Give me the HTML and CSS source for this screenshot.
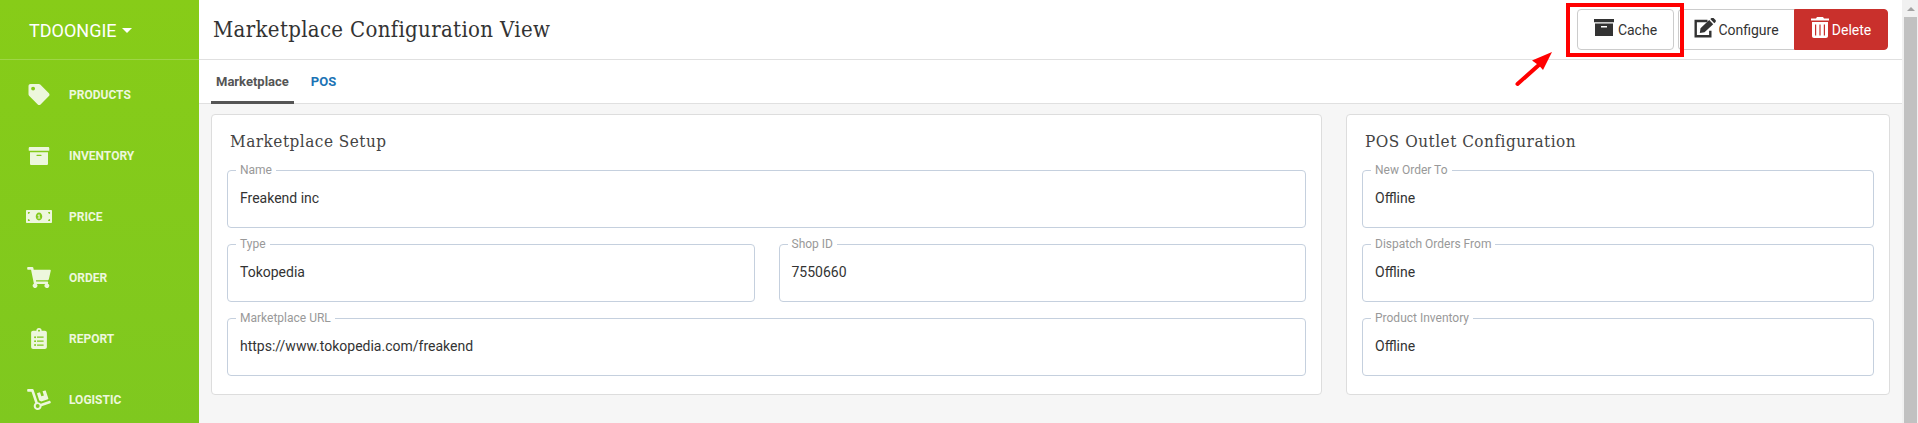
FILE: index.html
```html
<!DOCTYPE html>
<html lang="en">
<head>
  <meta charset="utf-8">
  <title>Marketplace Configuration View</title>
  <link rel="stylesheet" href="styles.css">
</head>
<body>

<div class="app">
  <nav class="sidebar">
    <div class="brand">TDOONGIE <span class="caret"></span></div>
    <ul class="menu">
      <li>
        <svg class="icon" viewBox="0 0 512 512" width="21" height="21"><path fill-rule="evenodd" d="M0 252V48C0 21 21 0 48 0h204a48 48 0 0 1 34 14l212 212c19 19 19 49 0 68L294 498c-19 19-49 19-68 0L14 286A48 48 0 0 1 0 252zM112 64a48 48 0 1 0 0 96 48 48 0 0 0 0-96z"/></svg>
        <span>PRODUCTS</span>
      </li>
      <li>
        <svg class="icon" viewBox="0 0 512 448" width="21" height="18"><path fill-rule="evenodd" d="M32 416c0 18 14 32 32 32h384c18 0 32-14 32-32V128H32zm160-212c0-7 5-12 12-12h104c7 0 12 5 12 12v8c0 7-5 12-12 12H204c-7 0-12-5-12-12zM480 0H32C14 0 0 14 0 32v48c0 9 7 16 16 16h480c9 0 16-7 16-16V32c0-18-14-32-32-32z"/></svg>
        <span>INVENTORY</span>
      </li>
      <li>
        <svg class="icon" viewBox="0 0 640 320" width="26" height="13"><path fill-rule="evenodd" d="M24 0h592c13 0 24 11 24 24v272c0 13-11 24-24 24H24c-13 0-24-11-24-24V24C0 11 11 0 24 0zM48 48v48c27 0 48-21 48-48zm0 176v48h48c0-27-21-48-48-48zM592 48h-48c0 27 21 48 48 48zm0 176c-27 0-48 21-48 48h48zM320 64c-44 0-80 43-80 96s36 96 80 96 80-43 80-96-36-96-80-96zm-32 144v-16h20v-56l-15 9-9-13 26-20h26v80h16v16z"/></svg>
        <span>PRICE</span>
      </li>
      <li>
        <svg class="icon" viewBox="0 0 576 512" width="24" height="21"><path d="M528 301l47-208c4-15-8-29-23-29H159l-9-45C148 8 138 0 126 0H24C11 0 0 11 0 24v16c0 13 11 24 24 24h70l70 343a56 56 0 1 0 67 9h210a56 56 0 1 0 64-10l5-25c4-15-8-29-23-29H218l-6-32h293c11 0 21-8 23-19z"/></svg>
        <span>ORDER</span>
      </li>
      <li>
        <svg class="icon" viewBox="0 0 384 512" width="16" height="21"><path fill-rule="evenodd" d="M336 64h-80a64 64 0 0 0-128 0H48C22 64 0 86 0 112v352c0 26 22 48 48 48h288c26 0 48-22 48-48V112c0-26-22-48-48-48zM192 40a24 24 0 1 1 0 48 24 24 0 0 1 0-48zM96 200a24 24 0 1 1 0 48 24 24 0 0 1 0-48zm0 96a24 24 0 1 1 0 48 24 24 0 0 1 0-48zm0 96a24 24 0 1 1 0 48 24 24 0 0 1 0-48zm48-184h160v32H144zm0 96h160v32H144zm0 96h160v32H144z"/></svg>
        <span>REPORT</span>
      </li>
      <li>
        <svg class="icon" viewBox="0 0 576 512" width="24" height="21"><path fill-rule="evenodd" d="M294 278c18 5 35 13 50 25l161-54c8-3 13-12 10-21L455 47c-3-8-12-13-20-10l-61 20 33 100-61 20-33-99-62 20c-8 3-13 12-10 20zM575 326l-10-30c-3-8-12-13-20-10l-214 71c-17-22-43-36-73-37L158 22A32 32 0 0 0 128 0H16C7 0 0 7 0 16v32c0 9 7 16 16 16h89l92 277c-26 20-42 53-36 90 6 39 38 72 77 79 60 11 112-35 114-92l213-72c8-3 13-12 10-20zM256 464a48 48 0 1 1 0-96 48 48 0 0 1 0 96z"/></svg>
        <span>LOGISTIC</span>
      </li>
    </ul>
  </nav>

  <main class="content">
    <header class="topbar">
      <h1>Marketplace Configuration View</h1>
      <div class="actions">
        <button class="btn cache">
          <svg viewBox="0 0 20 17" width="20" height="17"><path fill-rule="evenodd" d="M0 0h20v3.200H0zM1 4.400h18V17H1zM7 7v1.600h6V7z"/></svg>
          Cache
        </button>
        <div class="btn-group">
          <button class="btn configure">
            <svg viewBox="0 0 24 20" width="24" height="20"><path d="M13.500 3H1.700v15.300h14.600v-5.500" fill="none" stroke="currentColor" stroke-width="2.400"/><path d="M6.500 10.300l8.700-8.200 4 4.100-8.700 8.100-4.700.8zM16.300 1.100L17.500 0c.6-.5 1.500-.5 2 0l2 2.100c.5.600.5 1.400 0 2l-1.200 1.100z"/></svg>
            Configure
          </button>
          <button class="btn delete">
            <svg viewBox="0 0 18 21" width="18" height="21"><path fill-rule="evenodd" d="M0 1.500h5L6 0h6l1 1.500h5v2H0zM1 5h16v14c0 1.200-.8 2-2 2H3c-1.200 0-2-.8-2-2zm3 2.500v11h1.200v-11zm4.400 0v11h1.200v-11zm4.400 0v11H14v-11z"/></svg>
            Delete
          </button>
        </div>
      </div>
    </header>

    <div class="tabs">
      <a class="tab active">Marketplace</a>
      <a class="tab">POS</a>
    </div>

    <div class="panels">
      <section class="card">
        <h2>Marketplace Setup</h2>
        <fieldset><legend>Name</legend>Freakend inc</fieldset>
        <div class="row">
          <fieldset><legend>Type</legend>Tokopedia</fieldset>
          <fieldset><legend>Shop ID</legend>7550660</fieldset>
        </div>
        <fieldset><legend>Marketplace URL</legend>https://www.tokopedia.com/freakend</fieldset>
      </section>

      <section class="card">
        <h2>POS Outlet Configuration</h2>
        <fieldset><legend>New Order To</legend>Offline</fieldset>
        <fieldset><legend>Dispatch Orders From</legend>Offline</fieldset>
        <fieldset><legend>Product Inventory</legend>Offline</fieldset>
      </section>
    </div>
  </main>

  <div class="scrollbar">
    <svg viewBox="0 0 8 4" width="8" height="4"><path d="M0 4l4-4 4 4z"/></svg>
    <div class="thumb"></div>
  </div>
</div>

<!-- callout over the Cache button -->
<div class="highlight"></div>
<svg class="arrow" viewBox="0 0 40 36" width="40" height="36"><path d="M3.500 32L26 12" stroke="#f00" stroke-width="4" stroke-linecap="round"/><path d="M38 0L29 18l-4-4.500-7-5z" fill="#f00"/></svg>

</body>
</html>
```
FILE: styles.css
```css
* {
  box-sizing: border-box;
}

body {
  margin: 0;
  height: 423px;
  overflow: hidden;
  font: 14px/20px Roboto, Arial, sans-serif;
  color: #333;
  background: #f6f6f6;
}

h1, h2 {
  margin: 0;
  font-family: "Roboto Slab", "DejaVu Serif Condensed", "DejaVu Serif", serif;
  font-stretch: condensed;
  font-weight: normal;
  white-space: nowrap;
}

.app {
  display: grid;
  grid-template-columns: 199px 1fr 16px;
  height: 423px;
}

/* sidebar */
.sidebar {
  background: linear-gradient(#87cc18, #7fc81f);
  color: #fff;
  overflow: hidden;
}

.brand {
  display: flex;
  align-items: center;
  height: 60px;
  padding: 2px 0 0 29px;
  border-bottom: 1px solid #9fd646;
  font-size: 18px;
}

.caret {
  margin: -1px 0 0 5px;
  border: 5px solid transparent;
  border-top-color: #fff;
  border-bottom: 0;
}

.menu {
  margin: 0;
  padding: 4px 0 0;
  list-style: none;
}

.menu li {
  display: flex;
  align-items: center;
  gap: 17px;
  height: 61px;
  padding-left: 26px;
  font-size: 12px;
  font-weight: bold;
  color: #edf7dd;
}

.icon {
  width: 26px;
  fill: currentColor;
}

/* header */
.content {
  min-width: 0;
}

.topbar {
  display: flex;
  justify-content: space-between;
  height: 60px;
  padding: 9px 14px 0 14px;
  background: #fff;
  border-bottom: 1px solid #e0e0e0;
}

.topbar h1 {
  font-size: 22px;
  line-height: 42px;
  letter-spacing: 0.33px;
}

.actions {
  display: flex;
  gap: 4px;
}

.btn-group {
  display: flex;
}

.btn {
  display: flex;
  align-items: center;
  justify-content: center;
  height: 41px;
  padding: 0;
  border: 1px solid #ccc;
  border-radius: 4px;
  background: #fff;
  color: #333;
  font: inherit;
}

.btn svg {
  margin-top: -4px;
  fill: currentColor;
}

.cache {
  width: 97px;
  gap: 4px;
}

.configure {
  width: 116px;
  border-right: 0;
  border-radius: 4px 0 0 4px;
}

.delete {
  width: 94px;
  gap: 3px;
  border-color: #c9302c;
  border-radius: 0 4px 4px 0;
  background: #c9302c;
  color: #fff;
}

/* tabs */
.tabs {
  display: flex;
  gap: 12px;
  height: 44px;
  padding-left: 12px;
  background: #fff;
  border-bottom: 1px solid #e0e0e0;
}

.tab {
  height: 44px;
  padding: 0 5px;
  font-size: 13px;
  font-weight: bold;
  line-height: 43px;
  color: #1a73b5;
}

.tab.active {
  color: #555;
  border-bottom: 3px solid #555;
}

/* cards */
.panels {
  display: grid;
  grid-template-columns: 1111px 544px;
  gap: 24px;
  padding: 10px 12px;
}

.card {
  height: 281px;
  padding: 13px 15px 0;
  background: #fff;
  border: 1px solid #ddd;
  border-radius: 4px;
}

.card h2 {
  height: 34px;
  padding-left: 3px;
  font-size: 17px;
  line-height: 26px;
  letter-spacing: 0.5px;
  color: #444;
}

.row {
  display: grid;
  grid-template-columns: 1fr 1fr;
  gap: 24px;
}

fieldset {
  min-width: 0;
  height: 66px;
  margin: 0 0 8px;
  padding: 10px 12px 0;
  border: 1px solid #c5d0de;
  border-radius: 4px;
}

legend {
  margin-left: -4px;
  padding: 1px 4px 0;
  font-size: 12px;
  line-height: 15px;
  color: #999;
}

/* scrollbar */
.scrollbar {
  display: flex;
  flex-direction: column;
  align-items: center;
  padding: 7px 1px 0 2px;
  background: #f1f1f1;
}

.scrollbar svg {
  flex: none;
  fill: #a3a3a3;
}

.thumb {
  flex: 1;
  width: 13px;
  margin-top: 6px;
  background: #c1c1c1;
}

/* callout */
.highlight {
  position: absolute;
  left: 1566px;
  top: 3px;
  width: 118px;
  height: 54px;
  border: 4px solid #f00;
}

.arrow {
  position: absolute;
  left: 1514px;
  top: 52px;
}
```
